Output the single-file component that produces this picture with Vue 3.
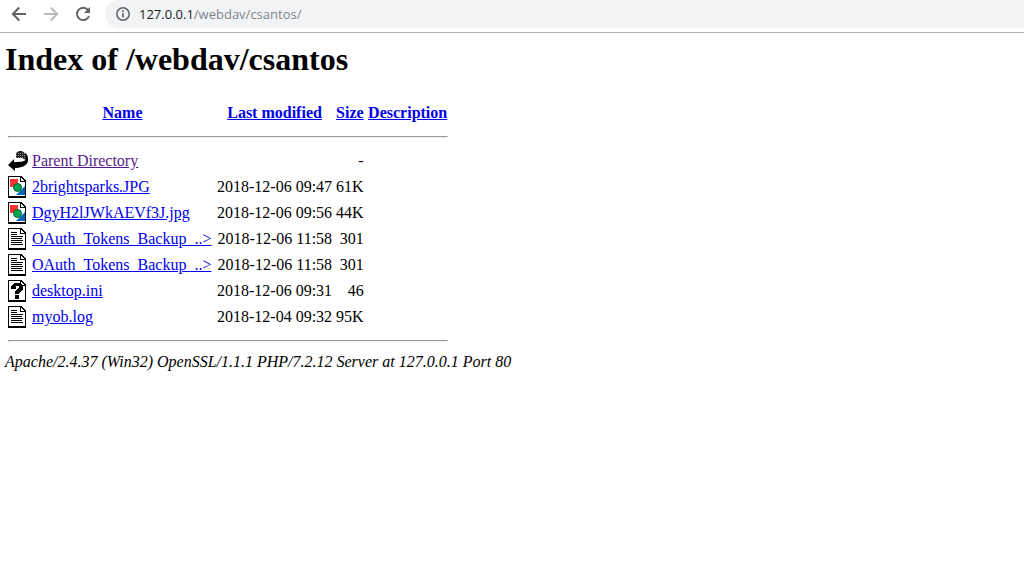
<script setup>
const columns = [
  { label: 'Name', key: 'name' },
  { label: 'Last modified', key: 'date' },
  { label: 'Size', key: 'size' },
  { label: 'Description', key: 'description' }
]
const files = [
  { kind: 'back', name: 'Parent Directory', date: '', size: '-' },
  { kind: 'image', name: '2brightsparks.JPG', date: '2018-12-06 09:47', size: '61K' },
  { kind: 'image', name: 'DgyH2lJWkAEVf3J.jpg', date: '2018-12-06 09:56', size: '44K' },
  { kind: 'text', name: 'OAuth_Tokens_Backup_..>', date: '2018-12-06 11:58', size: '301' },
  { kind: 'text', name: 'OAuth_Tokens_Backup_..>', date: '2018-12-06 11:58', size: '301' },
  { kind: 'unknown', name: 'desktop.ini', date: '2018-12-06 09:31', size: '46' },
  { kind: 'text', name: 'myob.log', date: '2018-12-04 09:32', size: '95K' }
]
</script>

<template>
  <header class="toolbar">
    <button class="nav" aria-label="Back">
      <svg viewBox="0 0 16 16" width="16" height="16"><path d="M15 8H2M8.300 1.500 1.800 8l6.500 6.500" fill="none" stroke="#5f6368" stroke-width="2" /></svg>
    </button>
    <button class="nav" aria-label="Forward" disabled>
      <svg viewBox="0 0 16 16" width="16" height="16"><path d="M1 8h13M7.700 1.500 14.200 8l-6.500 6.500" fill="none" stroke="#babcbe" stroke-width="2" /></svg>
    </button>
    <button class="nav" aria-label="Reload">
      <svg viewBox="0 0 16 16" width="16" height="16"><path d="M13 4A6.200 6.200 0 1 0 14 10" fill="none" stroke="#5f6368" stroke-width="2" /><path d="M15 1v6H9z" fill="#5f6368" /></svg>
    </button>
    <div class="address">
      <svg viewBox="0 0 14 14" width="14" height="14" aria-hidden="true"><circle cx="7" cy="7" r="6.200" fill="none" stroke="#5f6368" stroke-width="1.500" /><path d="M7 6v4.500M7 3.300v1.600" stroke="#5f6368" stroke-width="1.600" /></svg>
      <span class="url"><span class="host">127.0.0.1</span>/webdav/csantos/</span>
    </div>
  </header>
  <main>
    <h1>Index of /webdav/csantos</h1>
    <table>
      <thead>
        <tr>
          <th class="icon-cell"></th>
          <th v-for="column in columns" :key="column.key" :class="column.key"><a href="#">{{ column.label }}</a></th>
        </tr>
        <tr><th colspan="5"><hr /></th></tr>
      </thead>
      <tbody>
        <tr v-for="(file, i) in files" :key="i">
          <td class="icon-cell">
            <svg v-if="file.kind === 'back'" class="icon" viewBox="0 0 20 22" width="20" height="22">
              <path d="M8 3 11 1h3l4 3v6l-4-2H8z" fill="#222" />
              <path d="M8 3.500h9M8 5.500h9M8 7.500h9" stroke="#888" stroke-dasharray="1 1" />
              <path d="M17 3c2 1 3 3 3 6v2c-1 5-7 7-13 7v3l-7-6 6-6v3c5 0 11 0 12-3z" fill="#000" />
            </svg>
            <svg v-else class="icon" viewBox="0 0 20 22" width="20" height="22" shape-rendering="crispEdges">
              <path d="M0 0h13l5 5v17H0z" fill="#000" />
              <path d="M1 1h11v5h5v14H1z" fill="#fff" />
              <path d="M13 2v3h3z" fill="#fff" />
              <g v-if="file.kind === 'image'" shape-rendering="auto">
                <path d="M2 3h8v8H2z" fill="#f33" />
                <path d="M17 10v9H8z" fill="#06b" />
                <circle cx="9.500" cy="11.500" r="4" fill="#00a651" stroke="#063" />
              </g>
              <path v-else-if="file.kind === 'text'" d="M3 4.500h6M3 6.500h6M3 8.500h12M3 10.500h11M3 12.500h12M3 14.500h11M3 16.500h12" stroke="#000" />
              <g v-else>
                <path d="M3 9V6l3-3h6l3 2v5l-4 3v1H7v-3l4-3V6H8v3z" fill="#000" />
                <path d="M7 15h4v4H7z" fill="#000" />
              </g>
            </svg>
          </td>
          <td><a href="#" :class="{ visited: file.kind === 'back' }">{{ file.name }}</a></td>
          <td class="number">{{ file.date }}</td>
          <td class="number">{{ file.size }}</td>
          <td></td>
        </tr>
        <tr><th colspan="5"><hr /></th></tr>
      </tbody>
    </table>
    <address>Apache/2.4.37 (Win32) OpenSSL/1.1.1 PHP/7.2.12 Server at 127.0.0.1 Port 80</address>
  </main>
</template>

<style>
body {
  background: #fff;
}
</style>

<style scoped>
.toolbar {
  display: flex;
  align-items: center;
  height: 32px;
  padding-left: 11px;
  border-bottom: 1px solid #b3b3b3;
  box-sizing: content-box;
}
.nav {
  display: flex;
  width: 16px;
  margin: 0 16px 4px 0;
  padding: 0;
  border: 0;
  background: none;
}
.address {
  display: flex;
  flex: 1;
  align-items: center;
  gap: 9px;
  height: 28px;
  margin: 0 0 4px -2px;
  padding-left: 11px;
  border-radius: 14px 0 0 14px;
  background: #f1f3f4;
  font: 13px/20px "Open Sans", "Noto Sans", sans-serif;
}
.url {
  color: #80868b;
}
.host {
  color: #202124;
}
main {
  padding: 8px 5px;
  color: #000;
  font: 16px/18px "Liberation Serif", "Times New Roman", serif;
}
h1 {
  margin: 0 0 22px;
  font-size: 32px;
  line-height: 36px;
}
table {
  border-spacing: 2px;
}
th,
td {
  padding: 1px;
  white-space: nowrap;
}
.name {
  min-width: 181px;
}
.description {
  min-width: 80px;
}
.icon-cell {
  width: 20px;
  height: 22px;
}
.icon {
  display: block;
}
.number {
  text-align: right;
}
hr {
  margin: 8px 0;
}
a {
  color: #0000ee;
}
.visited {
  color: #551a8b;
}
</style>
